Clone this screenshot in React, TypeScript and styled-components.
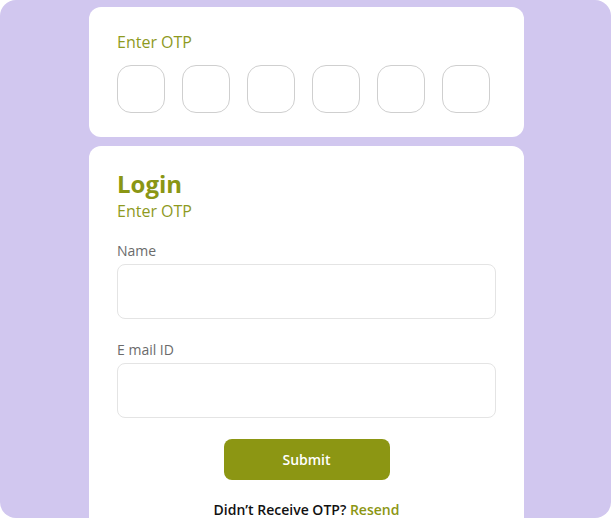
import React from "react";
import styled, { createGlobalStyle } from "styled-components";

const Global = createGlobalStyle`
  html, body { margin: 0; padding: 0; background: #ffffff; }
  body { font-family: "Open Sans", "Noto Sans", sans-serif; overflow: hidden; }
  * { box-sizing: border-box; }
`;

const Backdrop = styled.div`
  width: 611px;
  height: 518px;
  border-radius: 16px;
  background: #d1c7ef;
  padding: 7px 87px 0 89px;
  display: flex;
  flex-direction: column;
  gap: 9px;
`;

const Card = styled.section<{ $pad: string }>`
  background: #ffffff;
  border-radius: 12px;
  width: 435px;
  padding: ${(p) => p.$pad};
  display: flex;
  flex-direction: column;
  flex-shrink: 0;
`;

const OtpLabel = styled.div`
  font-size: 16px;
  line-height: 22px;
  color: #8e9a1f;
`;

const OtpRow = styled.div`
  display: flex;
  gap: 17px;
  margin-top: 12px;
`;

const OtpBox = styled.input`
  width: 48px;
  height: 48px;
  border: 1px solid #cfcfcf;
  border-radius: 14px;
  background: #fff;
  outline: none;
  padding: 0;
  font-family: inherit;
`;

const Title = styled.h1`
  margin: 0;
  font-size: 24px;
  line-height: 30px;
  font-weight: 700;
  color: #8a9614;
`;

const Subtitle = styled.div`
  margin-top: 1px;
  font-size: 16px;
  line-height: 22px;
  color: #8e9a1f;
`;

const FieldLabel = styled.label<{ $gap: number }>`
  display: block;
  margin-top: ${(p) => p.$gap}px;
  font-size: 14px;
  line-height: 20px;
  color: #6b6b6b;
`;

const TextInput = styled.input`
  display: block;
  width: 379px;
  height: 55px;
  margin-top: 3px;
  border: 1px solid #e4e4e4;
  border-radius: 8px;
  background: #fff;
  outline: none;
  font-family: inherit;
  font-size: 14px;
  padding: 0 14px;
`;

const SubmitButton = styled.button`
  align-self: center;
  margin-top: 21px;
  width: 166px;
  height: 41px;
  border: none;
  border-radius: 8px;
  background: #8c9613;
  color: #ffffff;
  font-family: inherit;
  font-size: 14px;
  font-weight: 600;
  cursor: pointer;
`;

const ResendLine = styled.p`
  margin: 20px 0 0;
  text-align: center;
  font-size: 14px;
  line-height: 20px;
  font-weight: 600;
  color: #111111;
`;

const ResendLink = styled.a`
  color: #8c9613;
  text-decoration: none;
  font-weight: 600;
`;

export default function App() {
  return (
    <>
      <Global />
      <Backdrop>
        <Card $pad="24px 28px 24px 28px">
          <OtpLabel>Enter OTP</OtpLabel>
          <OtpRow>
            {Array.from({ length: 6 }).map((_, i) => (
              <OtpBox key={i} maxLength={1} aria-label={`Digit ${i + 1}`} />
            ))}
          </OtpRow>
        </Card>
        <Card $pad="23px 28px 20px 28px">
          <Title>Login</Title>
          <Subtitle>Enter OTP</Subtitle>
          <FieldLabel $gap={19}>Name</FieldLabel>
          <TextInput type="text" />
          <FieldLabel $gap={21}>E mail ID</FieldLabel>
          <TextInput type="email" />
          <SubmitButton>Submit</SubmitButton>
          <ResendLine>
            Didn’t Receive OTP? <ResendLink href="#">Resend</ResendLink>
          </ResendLine>
        </Card>
      </Backdrop>
    </>
  );
}
